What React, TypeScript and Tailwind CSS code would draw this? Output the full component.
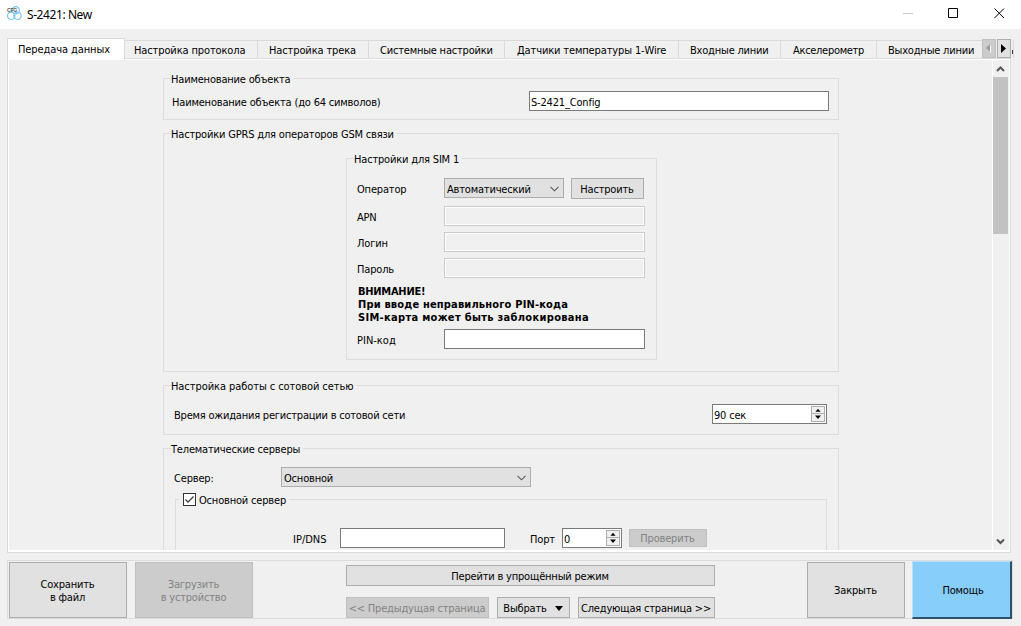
import React from "react";
import { clsx } from "clsx";

const tabs = [
  { label: "Настройка протокола", className: "w-[133px] pl-[9px] tracking-[-0.12px]" },
  { label: "Настройка трека", className: "w-[111px] pl-[11px] tracking-[-0.12px]" },
  { label: "Системные настройки", className: "w-[136px] pl-[11px] tracking-[-0.2px]" },
  { label: "Датчики температуры 1-Wire", className: "w-[174px] pl-3 tracking-[-0.13px]" },
  { label: "Входные линии", className: "w-[102px] pl-[11px] tracking-[-0.2px]" },
  { label: "Акселерометр", className: "w-24 pl-3 tracking-[-0.3px]" },
  { label: "Выходные линии", className: "w-[137px] pl-[11px] tracking-[-0.2px]" },
];

type BoxProps = {
  className?: string;
  children?: React.ReactNode;
};

const Group = ({ title, className, children }: BoxProps & { title: React.ReactNode }) => (
  <fieldset className={clsx("border border-[#dcdcdc]", className)}>
    <legend className="ml-[7px] h-[13px] pr-[3px] leading-[15px] whitespace-nowrap">{title}</legend>
    {children}
  </fieldset>
);

const Button = ({ className, disabled, children }: BoxProps & { disabled?: boolean }) => (
  <button
    disabled={disabled}
    className={clsx(
      "flex shrink-0 items-center justify-center border pt-px pr-px text-center leading-[13px] whitespace-nowrap",
      disabled ? "border-[#bfbfbf] bg-[#cccccc] text-[#838383]" : "border-[#adadad] bg-[#e1e1e1]",
      className
    )}
  >
    {children}
  </button>
);

const Field = ({ className, disabled, children }: BoxProps & { disabled?: boolean }) => (
  <div
    className={clsx(
      "flex h-5 shrink-0 items-center border pt-0.5 pl-px whitespace-nowrap",
      disabled ? "border-[#cccccc] shadow-[inset_0_0_0_1px_#fff]" : "border-[#7a7a7a] bg-white",
      className
    )}
  >
    {children}
  </div>
);

const Select = ({ className, children }: BoxProps) => (
  <div className={clsx("flex h-5 shrink-0 items-center justify-between border border-[#adadad] bg-[#e1e1e1] pr-1 pl-0.5", className)}>
    <span className="pt-0.5">{children}</span>
    <svg className="mt-px" width="9" height="6" viewBox="0 0 9 6" fill="none" stroke="#555" strokeWidth="1.1">
      <path d="M.5 .8 4.5 4.8 8.5 .8" />
    </svg>
  </div>
);

const Spin = ({ className, children }: BoxProps) => (
  <div className={clsx("flex h-5 shrink-0 items-center justify-between border border-[#7a7a7a] bg-white pr-px pl-px", className)}>
    <span className="pt-0.5">{children}</span>
    <span className="flex h-4 w-3.5 flex-col divide-y divide-[#adadad] border border-[#adadad] bg-[#f0f0f0]">
      <svg width="12" height="7" viewBox="0 0 12 7">
        <path d="M3 5.5h6L6 2z" />
      </svg>
      <svg width="12" height="7" viewBox="0 0 12 7">
        <path d="M3 1.5h6L6 5z" />
      </svg>
    </span>
  </div>
);

const TitleBar = () => (
  <header className="flex h-[29px] shrink-0 items-center bg-white pr-4 pl-[7px]">
    <svg className="mt-[-2px]" width="15" height="15" viewBox="0 0 15 15" fill="none">
      <g stroke="#7cc4ee" strokeWidth="1.2">
        <circle cx="8.8" cy="4.3" r="3.6" />
        <circle cx="4.2" cy="9.8" r="3.7" />
        <circle cx="10.5" cy="9.8" r="3.7" />
      </g>
      <text x="0" y="6" fontSize="5" fontWeight="bold" fill="#555" fontFamily="Liberation Sans, sans-serif">CFG</text>
    </svg>
    <h1 className="ml-[5px] font-['Noto_Sans','Open_Sans',sans-serif] text-xs tracking-[-0.42px]">S-2421: New</h1>
    <div className="mt-[-3px] ml-auto flex gap-[35px]">
      <svg width="11" height="11" viewBox="0 0 11 11" stroke="#c8c8c8">
        <path d="M1 5.5h10" />
      </svg>
      <svg width="11" height="11" viewBox="0 0 11 11" fill="none" stroke="#000">
        <path d="M.5 .5h9v9h-9z" />
      </svg>
      <svg width="11" height="11" viewBox="0 0 11 11" stroke="#000">
        <path d="m.5 .5 9.5 9.5M10 .5.5 10" />
      </svg>
    </div>
  </header>
);

const SimSettings = () => (
  <Group title="Настройки для SIM 1" className="mt-3 ml-[182px] h-[208px] w-[311px]">
    <div className="ml-2.5 flex h-5 items-start pt-[13px]">
      <span className="w-[87px] pt-[5px]">Оператор</span>
      <Select className="w-[120px]">Автоматический</Select>
      <Button className="ml-[7px] h-[21px] w-[73px]">Настроить</Button>
    </div>
    <div className="mt-[21px] ml-2.5 flex flex-col gap-1.5">
      {["APN", "Логин", "Пароль"].map((name) => (
        <div key={name} className="flex h-5 items-center">
          <span className="w-[87px] pt-0.5">{name}</span>
          <Field disabled className="w-[201px]" />
        </div>
      ))}
    </div>
    <p className="mt-[7px] ml-[11px] font-bold whitespace-nowrap">
      <span className="tracking-[-0.25px]">ВНИМАНИЕ!</span>
      <br />
      <span className="tracking-[0.17px]">При вводе неправильного PIN-кода</span>
      <br />
      <span className="tracking-[0.31px]">SIM-карта может быть заблокирована</span>
    </p>
    <div className="mt-[5px] ml-2.5 flex h-5 items-center">
      <span className="w-[87px] pt-0.5 tracking-normal">PIN-код</span>
      <Field className="w-[201px]" />
    </div>
  </Group>
);

const Servers = () => (
  <Group title="Телематические серверы" className="h-[140px] w-[676px] shrink-0">
    <div className="mt-3 ml-2.5 flex h-5 items-center">
      <span className="w-[107px] pt-0.5">Сервер:</span>
      <Select className="w-[250px]">Основной</Select>
    </div>
    <fieldset className="mt-1.5 ml-[11px] h-24 w-[652px] border border-[#dcdcdc]">
      <legend className="ml-[3px] flex h-[13px] items-center pr-[3px] pl-1">
        <span className="flex size-[13px] items-center justify-center border border-[#333] bg-white">
          <svg width="11" height="11" viewBox="0 0 11 11" fill="none" stroke="#333" strokeWidth="1.2">
            <path d="M1.5 5.5 4 8.2 9.5 2.5" />
          </svg>
        </span>
        <span className="ml-[3px] pt-0.5">Основной сервер</span>
      </legend>
      <div className="mt-[22px] flex h-5 items-center">
        <span className="ml-[117px] w-[47px] pt-0.5 tracking-normal">IP/DNS</span>
        <Field className="w-[165px]" />
        <span className="ml-[25px] w-8 pt-0.5">Порт</span>
        <Spin className="w-[60px]">0</Spin>
        <Button disabled className="ml-[7px] h-[18px] w-[78px]">Проверить</Button>
      </div>
    </fieldset>
  </Group>
);

const ScrollBar = () => (
  <div className="flex w-[17px] shrink-0 flex-col items-start border-l border-white">
    <svg width="15" height="17" viewBox="0 0 15 17" fill="none" stroke="#555" strokeWidth="2">
      <path d="m4 11 3.5-3.5L11 11" />
    </svg>
    <div className="h-[157px] w-[15px] bg-[#c2c2c2]" />
    <svg className="mt-auto" width="15" height="17" viewBox="0 0 15 17" fill="none" stroke="#555" strokeWidth="2">
      <path d="M4 6.5 7.5 10 11 6.5" />
    </svg>
  </div>
);

const App = () => (
  <div className="flex h-[626px] w-[1021px] flex-col overflow-hidden bg-[#f0f0f0] font-['DejaVu_Sans_Condensed','DejaVu_Sans',sans-serif] text-[11px] leading-[13px] tracking-[-0.18px] text-black">
    <TitleBar />

    {/* Tab strip */}
    <nav className="relative mt-[9px] ml-[7px] flex h-5 w-[1006px] shrink-0 items-end whitespace-nowrap">
      <div className="z-10 mb-[-2px] h-[22px] w-[118px] shrink-0 border border-b-0 border-[#dadada] bg-white pt-1 pl-2.5 tracking-[-0.1px]">
        Передача данных
      </div>
      {tabs.map((tab) => (
        <div key={tab.label} className={clsx("h-[18px] shrink-0 border-t border-r border-[#dadada] pt-[3px]", tab.className)}>
          {tab.label}
        </div>
      ))}
      <div className="absolute top-px right-0 flex gap-px bg-[#f0f0f0]">
        <span className="flex h-[19px] w-3.5 items-center justify-center border border-[#bfbfbf] bg-[#cccccc]">
          <svg width="8" height="9" viewBox="0 0 8 9">
            <path d="M6 1v8L2 5z" fill="#fff" />
            <path d="M5 0v8L1 4z" fill="#999" />
          </svg>
        </span>
        <span className="flex h-[19px] w-3.5 items-center justify-center border border-[#adadad] bg-[#e1e1e1]">
          <svg width="6" height="10" viewBox="0 0 6 10">
            <path d="M0 0v9l5-4.5z" />
          </svg>
        </span>
        <span className="mt-[11px] h-1 w-px bg-[#333]" />
      </div>
    </nav>

    {/* Scrolled page */}
    <main className="ml-[7px] h-[495px] w-[1004px] shrink-0 border border-[#dadada]">
      <div className="flex h-full border border-b-2 border-white">
        <div className="flex min-w-0 flex-1 flex-col gap-[7px] overflow-hidden bg-[#f0f0f0] pt-3 pl-[154px]">
          <Group title="Наименование объекта" className="h-12 w-[676px] shrink-0">
            <div className="mt-1.5 flex h-5 items-center pl-2">
              <span className="w-[357px] pt-0.5">Наименование объекта (до 64 символов)</span>
              <Field className="w-[300px]">S-2421_Config</Field>
            </div>
          </Group>
          <Group title="Настройки GPRS для операторов GSM связи" className="h-[245px] w-[676px] shrink-0">
            <SimSettings />
          </Group>
          <Group
            title={<span className="tracking-[-0.07px]">Настройка работы с сотовой сетью</span>}
            className="h-14 w-[676px] shrink-0"
          >
            <div className="mt-3 flex h-5 items-center justify-between pr-[11px] pl-2.5">
              <span className="pt-0.5 tracking-[-0.21px]">Время ожидания регистрации в сотовой сети</span>
              <Spin className="w-[115px]">90 сек</Spin>
            </div>
          </Group>
          <Servers />
        </div>
        <ScrollBar />
      </div>
    </main>

    {/* Bottom buttons */}
    <footer className="mt-[7px] ml-[7px] flex h-[59px] w-[1006px] shrink-0 border border-[#dcdcdc] pt-px pl-px">
      <Button className="h-14 w-[118px]">
        Сохранить
        <br />в файл
      </Button>
      <Button disabled className="ml-2 h-14 w-[118px]">
        Загрузить
        <br />в устройство
      </Button>
      <div className="mt-[3px] ml-[93px] flex w-[369px] flex-col gap-[11px]">
        <Button className="h-[21px] w-full">Перейти в упрощённый режим</Button>
        <div className="flex gap-2">
          <Button disabled className="h-[21px] w-[143px]">&lt;&lt; Предыдущая страница</Button>
          <Button className="h-[21px] w-[73px] gap-2">
            Выбрать
            <svg width="8" height="5" viewBox="0 0 8 5">
              <path d="M0 0h8L4 5z" />
            </svg>
          </Button>
          <Button className="h-[21px] w-[137px]">Следующая страница &gt;&gt;</Button>
        </div>
      </div>
      <Button className="ml-[92px] h-14 w-[98px] pt-0.5">Закрыть</Button>
      <button className="-mt-px ml-[7px] h-[58px] w-[100px] border-t border-r-2 border-b-2 border-l border-t-[#b5e1fc] border-r-[#2f5069] border-b-[#2f5069] border-l-[#b5e1fc] bg-[#87cefa] pt-0.5 pl-[3px]">
        Помощь
      </button>
    </footer>
  </div>
);

export default App;
